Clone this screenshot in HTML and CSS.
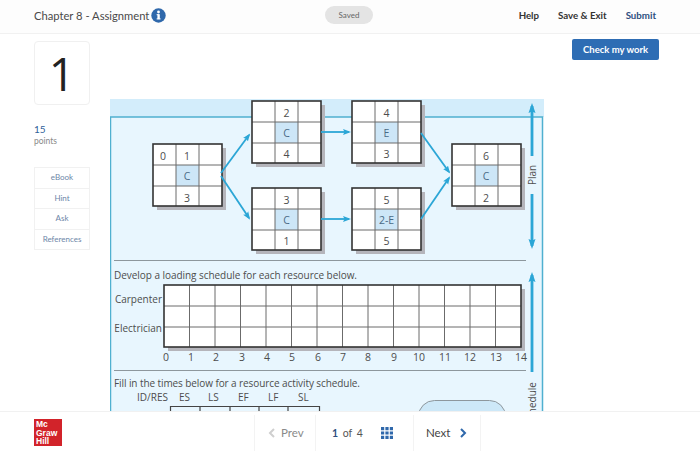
FILE: index.html
```html
<!DOCTYPE html>
<html>

	<head>
		<meta charset="utf-8" />
		<title>Chapter 8 - Assignment</title>
		<link rel="stylesheet" href="styles.css">
	</head>

	<body>
		<div class="page">
			<!--top bar-->
			<div class="top-bar">
				<span class="title">Chapter 8 - Assignment</span>
				<svg class="info" width="15" height="15" viewBox="0 0 15 15">
					<circle cx="7.5" cy="7.5" r="7.2" fill="#2f68ab"></circle>
					<rect x="6.4" y="6.2" width="2.4" height="5" fill="#fff"></rect>
					<rect x="5.6" y="6.2" width="2" height="1" fill="#fff"></rect>
					<rect x="5.6" y="10.4" width="4" height="1" fill="#fff"></rect>
					<circle cx="7.5" cy="4" r="1.4" fill="#fff"></circle>
				</svg>
				<span class="saved">Saved</span>
				<div class="top-links">
					<a>Help</a>
					<a>Save &amp; Exit</a>
					<a class="submit">Submit</a>
				</div>
			</div>

			<div class="main">
				<div class="side">
					<div class="number">1</div>
					<div class="points-num">15</div>
					<div class="points">points</div>
					<div class="side-menu">
						<a>eBook</a>
						<a>Hint</a>
						<a>Ask</a>
						<a>References</a>
					</div>
				</div>

				<div class="content">
					<button class="check">Check my work</button>
					<!--viewBox uses the coordinates of the page-->
					<svg class="figure" width="434" height="312" viewBox="110 99 434 312">
						<defs>
							<g id="node">
								<rect x="4" y="4" width="69" height="62" class="shadow"></rect>
								<rect x="0" y="0" width="69" height="62" class="cell"></rect>
								<rect x="23" y="21" width="23" height="21" class="mid"></rect>
								<path d="M23 0V62M46 0V62M0 21H69M0 42H69" class="thin"></path>
								<rect x="0" y="0" width="69" height="62" class="outer"></rect>
							</g>
							<marker id="head" markerUnits="userSpaceOnUse" markerWidth="8" markerHeight="8" refX="6" refY="4" orient="auto">
								<path d="M0 1L8 4L0 7L1.500 4Z" fill="#2ba6d6"></path>
							</marker>
							<marker id="head-big" markerUnits="userSpaceOnUse" markerWidth="10" markerHeight="8" refX="7" refY="4" orient="auto">
								<path d="M0 .5L10 4L0 7.500L1.500 4Z" fill="#2ba6d6"></path>
							</marker>
						</defs>

						<rect x="110" y="99" width="434" height="18" class="band"></rect>
						<rect x="110.500" y="117" width="432" height="310" class="frame"></rect>

						<use href="#node" x="153" y="144"></use>
						<use href="#node" x="252" y="101"></use>
						<use href="#node" x="252" y="188"></use>
						<use href="#node" x="352" y="101"></use>
						<use href="#node" x="352" y="188"></use>
						<use href="#node" x="452" y="144"></use>

						<text x="163" y="160" class="num">0</text>
						<text x="187" y="160" class="num">1</text>
						<text x="187" y="180" class="num letter">C</text>
						<text x="187" y="202" class="num">3</text>

						<text x="286.500" y="117" class="num">2</text>
						<text x="286.500" y="137" class="num letter">C</text>
						<text x="286.500" y="158" class="num">4</text>
						<text x="286.500" y="204" class="num">3</text>
						<text x="286.500" y="224" class="num letter">C</text>
						<text x="286.500" y="245" class="num">1</text>

						<text x="386.500" y="117" class="num">4</text>
						<text x="386.500" y="137" class="num letter">E</text>
						<text x="386.500" y="158" class="num">3</text>
						<text x="386.500" y="204" class="num">5</text>
						<text x="386.500" y="224" class="num letter">2-E</text>
						<text x="386.500" y="245" class="num">5</text>

						<text x="486" y="160" class="num">6</text>
						<text x="486" y="180" class="num letter">C</text>
						<text x="486" y="202" class="num">2</text>

						<path d="M221 173L249 135" class="arrow"></path>
						<path d="M221 176L249 218" class="arrow"></path>
						<path d="M321 132L349 132" class="arrow"></path>
						<path d="M321 219L349 219" class="arrow"></path>
						<path d="M421 133L449 172" class="arrow"></path>
						<path d="M421 219L449 178" class="arrow"></path>

						<path d="M532 156L532 106" class="arrow thick"></path>
						<path d="M532 194L532 246" class="arrow thick"></path>
						<text transform="translate(536 175) rotate(-90)" class="num side-label">Plan</text>

						<path d="M114 260.500H526M114 370.500H526" class="rule"></path>
						<text x="114" y="279" class="note" textLength="243">Develop a loading schedule for each resource below.</text>

						<rect x="168" y="289" width="357" height="62" class="shadow"></rect>
						<rect x="164" y="285" width="357" height="62" class="cell"></rect>
						<path d="M189.500 285V347M215 285V347M240.500 285V347M266 285V347M291.500 285V347M317 285V347M342.500 285V347M368 285V347M393.500 285V347M419 285V347M444.500 285V347M470 285V347M495.500 285V347M164 306H521M164 327H521" class="thin"></path>
						<rect x="164" y="285" width="357" height="62" class="outer"></rect>
						<text x="162" y="303" class="note end">Carpenter</text>
						<text x="162" y="332" class="note end">Electrician</text>

						<text x="166" y="361" class="num">0</text>
						<text x="191" y="361" class="num">1</text>
						<text x="216" y="361" class="num">2</text>
						<text x="242" y="361" class="num">3</text>
						<text x="267" y="361" class="num">4</text>
						<text x="292" y="361" class="num">5</text>
						<text x="318" y="361" class="num">6</text>
						<text x="343" y="361" class="num">7</text>
						<text x="368" y="361" class="num">8</text>
						<text x="394" y="361" class="num">9</text>
						<text x="419" y="361" class="num">10</text>
						<text x="445" y="361" class="num">11</text>
						<text x="470" y="361" class="num">12</text>
						<text x="496" y="361" class="num">13</text>
						<text x="521" y="361" class="num">14</text>

						<path d="M532 372L532 275" class="arrow thick"></path>
						<text transform="translate(536 382) rotate(-90)" class="num schedule">Schedule</text>

						<text x="114" y="387" class="note" textLength="246">Fill in the times below for a resource activity schedule.</text>
						<text x="137" y="401" class="note">ID/RES</text>
						<text x="179" y="401" class="note">ES</text>
						<text x="208" y="401" class="note">LS</text>
						<text x="238" y="401" class="note">EF</text>
						<text x="268" y="401" class="note">LF</text>
						<text x="298" y="401" class="note">SL</text>
						<path d="M170.500 411V406.500H319.500V411M200 406V411M230 406V411M259 406V411M288 406V411" class="top-line"></path>
						<rect x="418.500" y="400.500" width="87" height="40" rx="16" class="pill"></rect>
					</svg>
				</div>
			</div>

			<!--bottom bar-->
			<div class="bottom-bar">
				<div class="logo">
					<span>Mc</span>
					<span>Graw</span>
					<span>Hill</span>
				</div>
				<div class="pager">
					<a class="prev">
						<svg width="8" height="10" viewBox="0 0 8 10"><path d="M6 1L2 5L6 9" class="chev grey"></path></svg>
						Prev
					</a>
					<div class="pages">
						<span class="count"><b>1</b> of <i>4</i></span>
						<svg width="12" height="12" viewBox="0 0 12 12" class="dots">
							<path d="M0 0h3.200v3.200H0zM4.400 0h3.200v3.200H4.400zM8.800 0H12v3.200H8.800zM0 4.400h3.200v3.200H0zM4.400 4.400h3.200v3.200H4.400zM8.800 4.400H12v3.200H8.800zM0 8.800h3.200V12H0zM4.400 8.800h3.200V12H4.400zM8.800 8.800H12V12H8.800z"></path>
						</svg>
					</div>
					<a class="next">
						Next
						<svg width="8" height="10" viewBox="0 0 8 10"><path d="M2 1L6 5L2 9" class="chev"></path></svg>
					</a>
				</div>
			</div>
		</div>
	</body>

</html>
```

FILE: styles.css
```css
html, body {
	margin: 0;
	padding: 0;
	background-color: #fff;
}
body {
	font-family: "Lato", "Open Sans", sans-serif;
	color: #444;
}
.page {
	width: 700px;
	height: 453px;
	display: flex;
	flex-direction: column;
	overflow: hidden;
}

/* top bar */
.top-bar {
	flex: none;
	display: flex;
	align-items: center;
	padding: 0 44px 3px 34px;
	box-sizing: content-box;
	height: 30px;
	background-color: #fdfdfd;
	border-bottom: 1px solid #f1f1f1;
}
.title {
	width: 117px;
	font-size: 11.2px;
	white-space: nowrap;
	color: #4a4a4a;
}
.info {
	flex: none;
}
.saved {
	margin-left: 159px;
	width: 48px;
	height: 18px;
	line-height: 18px;
	text-align: center;
	font-size: 8px;
	color: #666;
	background-color: #e4e4e4;
	border-radius: 9px;
}
.top-links {
	margin-left: auto;
	display: flex;
	gap: 19px;
	font-size: 9.7px;
	font-weight: 700;
	color: #333;
}
.top-links .submit {
	color: #2e4f80;
}

/* left column */
.main {
	flex: 1;
	min-height: 0;
	display: flex;
	overflow: hidden;
}
.side {
	width: 56px;
	margin: 7px 20px 0 34px;
	flex: none;
}
.number {
	height: 62px;
	line-height: 62px;
	text-align: center;
	font-family: "Open Sans", sans-serif;
	font-size: 46px;
	color: #222;
	border: 1px solid #f0f0f0;
	border-radius: 4px;
	width: 54px;
}
.points-num {
	margin-top: 18px;
	font-size: 10px;
	color: #2f5f9a;
}
.points {
	margin-top: 1px;
	font-size: 8.5px;
	color: #8a8a8a;
}
.side-menu {
	margin-top: 21px;
	border: 1px solid #f1f1f1;
}
.side-menu a {
	display: block;
	height: 19.5px;
	line-height: 19.5px;
	text-align: center;
	font-size: 8px;
	color: #6d86a8;
	border-bottom: 1px solid #f1f1f1;
}
.side-menu a:last-child {
	border-bottom: none;
}

/* figure */
.content {
	flex: 1;
	display: flex;
	flex-direction: column;
	padding: 5px 41px 0 0;
}
.check {
	align-self: flex-end;
	flex: none;
	width: 87px;
	height: 21px;
	padding: 0;
	border: none;
	border-radius: 2px;
	font-family: inherit;
	font-size: 9.5px;
	font-weight: 700;
	color: #fff;
	background-color: #2e6db4;
}
.figure {
	display: block;
	flex: none;
	margin-top: 39px;
}
.band {
	fill: #d3edfb;
}
.frame {
	fill: #e8f6fe;
	stroke: #4fb0d0;
	stroke-width: 1.5;
}
.shadow {
	fill: #b5b5bb;
}
.cell {
	fill: #fff;
}
.mid {
	fill: #cde6f7;
}
.thin {
	fill: none;
	stroke: #6b6b6b;
	stroke-width: 1;
}
.outer {
	fill: none;
	stroke: #333;
	stroke-width: 1.6;
}
.num, .note {
	font-family: "Open Sans", sans-serif;
	fill: #4d4d4d;
}
.num {
	font-size: 10.5px;
	text-anchor: middle;
}
.letter {
	fill: #4a6a85;
}
.note {
	font-size: 10px;
}
.note.end {
	text-anchor: end;
}
.side-label {
	font-size: 10px;
}
.schedule {
	font-size: 10px;
	text-anchor: end;
}
.arrow {
	fill: none;
	stroke: #2ba6d6;
	stroke-width: 1.8;
	marker-end: url(#head);
}
.arrow.thick {
	stroke-width: 2.8;
	marker-end: url(#head-big);
}
.rule {
	fill: none;
	stroke: #8d979d;
	stroke-width: 1;
}
.top-line {
	fill: none;
	stroke: #444;
	stroke-width: 1.2;
}
.pill {
	fill: #cde8f8;
	stroke: #8d979d;
	stroke-width: 1;
}

/* bottom bar */
.bottom-bar {
	height: 41px;
	flex: none;
	display: flex;
	align-items: center;
	padding-left: 34px;
	background-color: #fff;
	border-top: 1px solid #f1f1f1;
}
.logo {
	width: 28px;
	height: 27px;
	padding: 1px 0 0 2px;
	box-sizing: border-box;
	display: flex;
	flex-direction: column;
	font-family: "Liberation Sans", sans-serif;
	font-size: 8.5px;
	line-height: 8.500px;
	font-weight: 700;
	color: #fff;
	background-color: #d2232a;
}
.pager {
	margin-left: 192px;
	height: 41px;
	display: flex;
	align-items: center;
	font-size: 11.5px;
}
.pager a {
	display: flex;
	align-items: center;
	height: 36px;
	border-left: 1px solid #f3f3f3;
	border-right: 1px solid #f3f3f3;
}
.prev {
	width: 62px;
	padding-left: 13px;
	gap: 5px;
	color: #8a8a8a;
	box-sizing: border-box;
}
.pages {
	width: 97px;
	padding-left: 16px;
	box-sizing: border-box;
	display: flex;
	align-items: center;
	gap: 18px;
}
.count {
	font-size: 10.5px;
	word-spacing: 2px;
	color: #555;
	white-space: nowrap;
}
.count b {
	color: #2e4f80;
}
.count i {
	font-style: normal;
}
.dots {
	fill: #2f68ab;
}
.next {
	width: 68px;
	padding-left: 12px;
	gap: 9px;
	color: #444;
	box-sizing: border-box;
}
.chev {
	fill: none;
	stroke: #2f68ab;
	stroke-width: 2;
}
.chev.grey {
	stroke: #cfcfcf;
}
```
